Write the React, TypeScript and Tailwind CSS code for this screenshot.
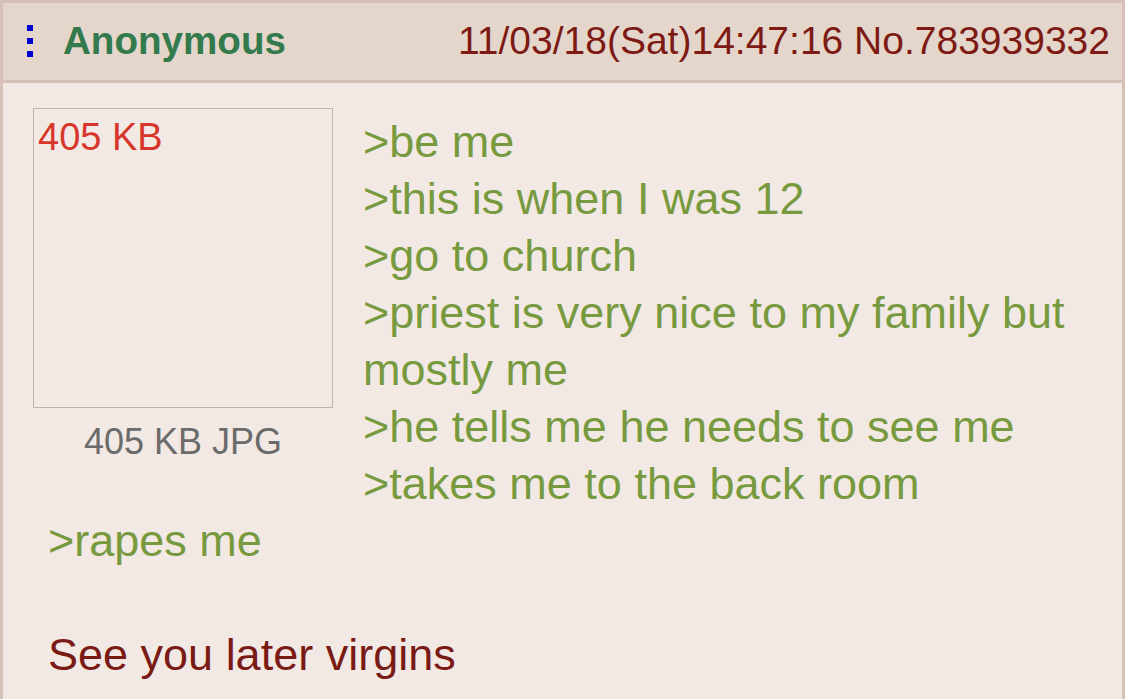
import React from "react";

const green = "text-[#789a3f]";

export default function App() {
  const lines = [
    ">be me",
    ">this is when I was 12",
    ">go to church",
    ">priest is very nice to my family but mostly me",
    ">he tells me he needs to see me",
    ">takes me to the back room",
    ">rapes me",
  ];
  return (
    <div className="w-[1125px] h-[699px] overflow-hidden bg-[#f2e9e4] border-[3px] border-b-0 border-[#d6c0b8] font-['Liberation_Sans',Arial,sans-serif]">
      <div className="h-[80px] bg-[#e5d6cc] border-b-[3px] border-[#d6c0b8] flex items-center justify-between pl-[24px] pr-[12px] pb-[2px]">
        <div className="flex items-center">
          <div className="flex flex-col gap-[7px]">
            <span className="block w-[6px] h-[6px] bg-[#0000d0]" />
            <span className="block w-[6px] h-[6px] bg-[#0000d0]" />
            <span className="block w-[6px] h-[6px] bg-[#0000d0]" />
          </div>
          <span className="ml-[30px] text-[38.6px] leading-[44px] font-bold text-[#337a4c]">
            Anonymous
          </span>
        </div>
        <span className="text-[39px] leading-[44px] text-[#7d1a14]">
          11/03/18(Sat)14:47:16 No.783939332
        </span>
      </div>
      <div className="pt-[30px] pl-[45px] pr-[20px]">
        <div className="text-[45px] leading-[57px]">
          <div className="float-left -ml-[15px] mr-[30px] -mt-[5px] w-[300px]">
            <div className="w-[300px] h-[300px] border border-[#bdb5b1] pl-[4px] pt-[9px]">
              <div className="text-[38px] leading-[38px] text-[#d8362a]">405 KB</div>
            </div>
            <div className="mt-[16px] text-center text-[36px] leading-[36px] text-[#6b6b6b]">
              405 KB JPG
            </div>
          </div>
          {lines.map((l, i) => (
            <div key={i} className={green}>
              {l}
            </div>
          ))}
          <div>&nbsp;</div>
          <div className="text-[#7a1a14]">See you later virgins</div>
        </div>
      </div>
    </div>
  );
}
